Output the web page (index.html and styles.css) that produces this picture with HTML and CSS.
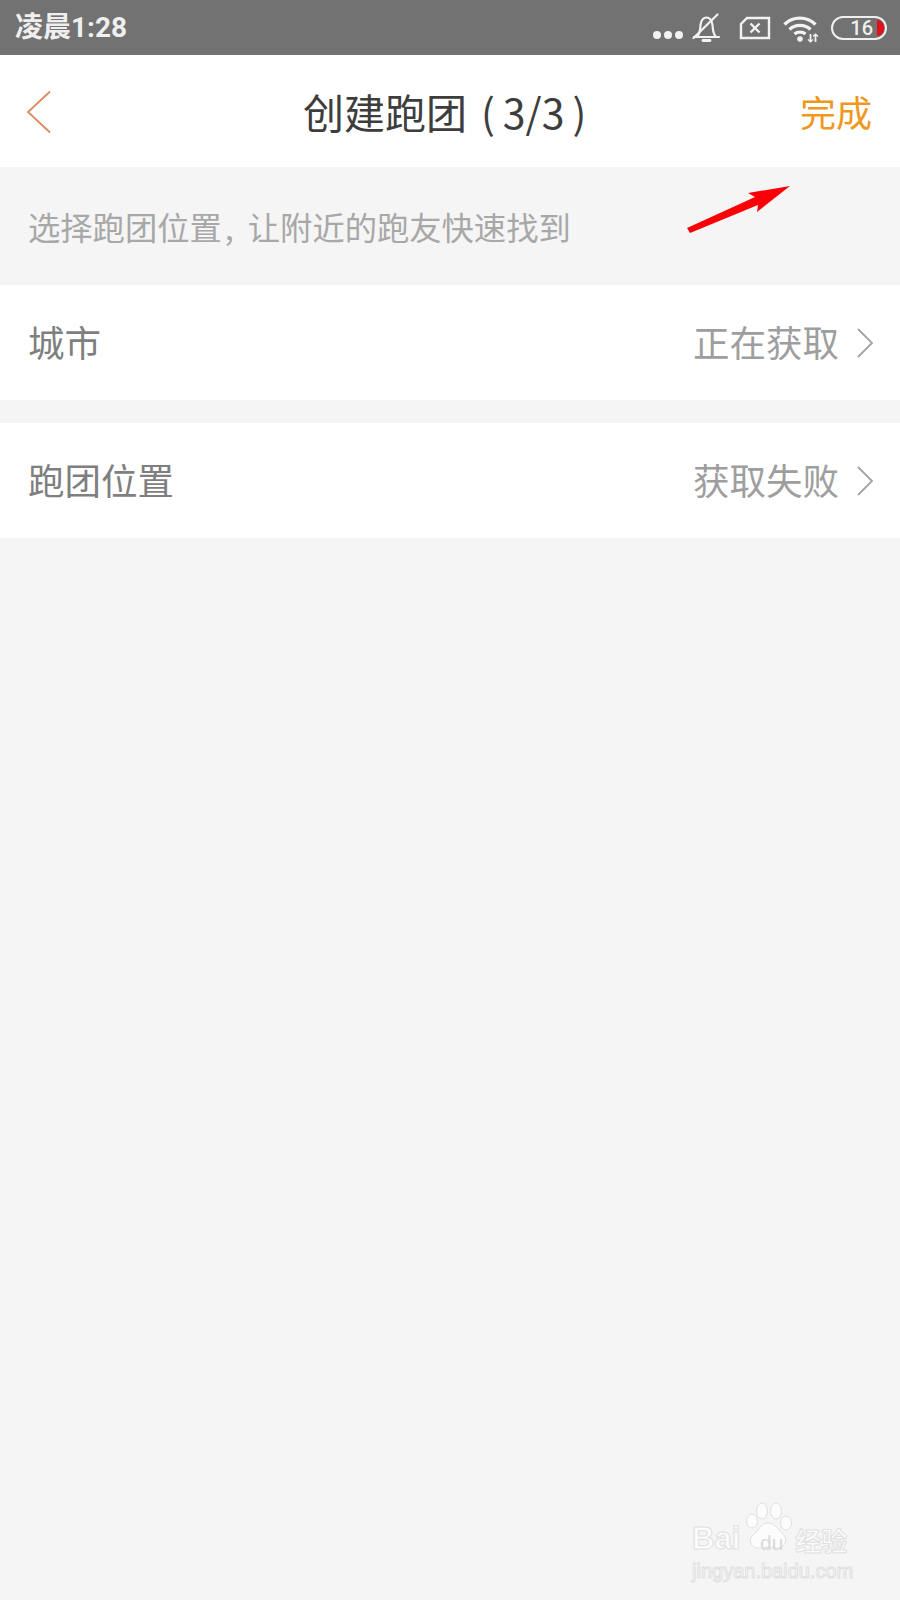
FILE: index.html
```html
<!DOCTYPE html>
<html lang="zh-CN">
<head>
<meta charset="utf-8">
<title>创建跑团</title>
<link rel="stylesheet" href="styles.css">
</head>
<body>
<div class="screen">
  <header class="status">
    <span class="clock">凌晨1:28</span>
    <div class="status-icons">
      <span class="dots"><i></i><i></i><i></i></span>
      <svg class="ic-bell" width="30" height="30" viewBox="0 0 30 30" fill="none" stroke="#f2f2f2" stroke-width="2.200" stroke-linecap="round">
        <path d="M3 24H28M6 24C9.500 20 9 16 9.500 12C10 7.500 12.500 4.500 15.500 4.500C18.500 4.500 21 7.500 21.500 12C22 16 21.500 20 25 24"/>
        <path d="M12 27.500H19" stroke-width="2.800"/>
        <path d="M2.500 25L26.500 1.500"/>
      </svg>
      <svg class="ic-sim" width="32" height="24" viewBox="0 0 32 24" fill="none" stroke="#f2f2f2" stroke-width="2.400">
        <path d="M8 2H30V22H2V8Z"/>
        <path d="M11.500 7.500L20.500 16.500M20.500 7.500L11.500 16.500"/>
      </svg>
      <svg class="ic-wifi" width="36" height="28" viewBox="0 0 36 28" fill="none" stroke="#f2f2f2" stroke-width="3.400">
        <path d="M1.500 9.500C9.500 1 24 1 32.500 9.500M6.500 14.500C12 9 22 9 27.500 14.500M11.500 19C14.500 16.500 19.500 16.500 22.500 19"/>
        <circle cx="17" cy="24" r="2.800" fill="#f2f2f2" stroke="none"/>
        <path d="M27.500 19V27M32.500 19V27" stroke-width="1.800"/>
        <path d="M25 24.500L27.500 27L30 24.500M30 21.500L32.500 19L35 21.500" stroke-width="1.200"/>
      </svg>
      <div class="battery"><span class="batt-num">16</span><span class="batt-low"></span></div>
    </div>
  </header>

  <nav class="nav">
    <svg class="back" width="26" height="46" viewBox="0 0 26 46" fill="none" stroke="#dd8a5c" stroke-width="1.800">
      <path d="M24 2.500L2 23L24 43.500"/>
    </svg>
    <h1 class="title">创建跑团<span class="paren-open">(</span>3/3<span class="paren-close">)</span></h1>
    <span class="done">完成</span>
  </nav>

  <p class="hint">选择跑团位置<span class="hint-comma">,</span>让附近的跑友快速找到</p>

  <section class="row row-first">
    <span class="label">城市</span>
    <span class="value">正在获取</span>
    <svg class="chev" width="18" height="32" viewBox="0 0 18 32" fill="none" stroke="#a3a3a3" stroke-width="1.800"><path d="M2 2L16 16L2 30"/></svg>
  </section>
  <section class="row row-second">
    <span class="label">跑团位置</span>
    <span class="value">获取失败</span>
    <svg class="chev" width="18" height="32" viewBox="0 0 18 32" fill="none" stroke="#a3a3a3" stroke-width="1.800"><path d="M2 2L16 16L2 30"/></svg>
  </section>

  <svg class="arrow" width="106" height="50" viewBox="0 0 106 50">
    <path d="M1 43L69 12L62 8L104 1L71 27L72 20L4 48Z" fill="#fb0007"/>
  </svg>

  <div class="mark">
    <div class="mark-top">
      <span class="mark-bai">Bai</span>
      <svg class="mark-paw" width="48" height="48" viewBox="0 0 48 48" fill="#fcfcfc" stroke="#e0e0e0" stroke-width="1">
        <ellipse cx="7" cy="19" rx="5.500" ry="7"/>
        <ellipse cx="17" cy="9" rx="5.500" ry="8"/>
        <ellipse cx="31" cy="9" rx="5.500" ry="8"/>
        <ellipse cx="41" cy="21" rx="5.500" ry="7"/>
        <path d="M23 21C30 21 32 27 38 32C44 38 39 47 31 46C26 45 20 45 15 46C7 47 2 39 8 33C14 28 16 21 23 21Z"/>
      </svg>
      <span class="mark-du">du</span>
      <span class="mark-cn">经验</span>
    </div>
    <div class="mark-url">jingyan.baidu.com</div>
  </div>
</div>
</body>
</html>
```

FILE: styles.css
```css
* { box-sizing: border-box; }
html, body { margin: 0; padding: 0; }
body { font-family: "Noto Sans CJK SC", "Noto Sans", sans-serif; background: #f5f5f5; }

.screen { position: relative; width: 900px; height: 1600px; background: #f5f5f5; overflow: hidden; }

.status {
  height: 55px;
  background: #727272;
  display: flex;
  align-items: center;
  justify-content: space-between;
  padding: 0 13px 0 15px;
  color: #efefef;
}
.clock { font-family: Roboto, "Noto Sans CJK SC", sans-serif; font-size: 28px; font-weight: 700; line-height: 1; }
.status-icons { display: flex; align-items: center; }
.dots { display: flex; gap: 3px; margin-top: 14px; margin-right: 8px; }
.dots i { display: block; width: 8px; height: 8px; border-radius: 50%; background: #f2f2f2; }
.ic-bell { margin-right: 18px; margin-top: 1px; }
.ic-sim { margin-right: 12px; margin-top: 1px; }
.ic-wifi { margin-right: 12px; margin-top: 3px; }
.battery {
  width: 56px;
  height: 24px;
  border: 2px solid #efefef;
  border-radius: 12px;
  display: flex;
  align-items: center;
  justify-content: flex-end;
  padding-right: 1px;
}
.batt-num { font-family: Roboto, sans-serif; font-size: 20px; font-weight: 500; line-height: 1; margin-right: 4px; }
.batt-low { width: 7px; height: 16px; background: #e0101c; border-radius: 0 8px 8px 0; }

.nav {
  position: relative;
  height: 112px;
  background: #fff;
  display: flex;
  align-items: center;
  justify-content: space-between;
  padding: 0 28px 0 26px;
}
.back { margin-top: 2px; }
.title {
  position: absolute;
  left: 303px;
  top: 0;
  margin: 0;
  font-size: 41px;
  font-weight: 400;
  line-height: 112px;
  color: #3d3d3d;
  white-space: nowrap;
}
.paren-open { margin-left: 14px; margin-right: 8px; }
.paren-close { margin-left: 8px; }
.done { font-size: 36px; line-height: 1; color: #f0971e; }

.hint {
  margin: 0;
  height: 118px;
  padding-left: 28px;
  font-size: 32.300px;
  line-height: 118px;
  color: #a8a8a8;
  white-space: nowrap;
}
.hint-comma { margin-left: 3px; margin-right: 14px; }

.row {
  height: 115px;
  background: #fff;
  display: flex;
  align-items: center;
  padding: 0 26px 0 28px;
}
.row-second { margin-top: 23px; }
.label { font-size: 36.500px; line-height: 1; color: #7f7f7f; flex: 1; }
.value { font-size: 36.500px; line-height: 1; color: #9e9e9e; margin-right: 17px; }

.arrow { position: absolute; left: 686px; top: 185px; }

.mark {
  position: absolute;
  left: 692px;
  top: 1503px;
  width: 170px;
  color: #fcfcfc;
}
.mark-top { display: flex; align-items: flex-end; position: relative; height: 50px; }
.mark-bai {
  font-family: "Liberation Sans", sans-serif;
  font-size: 31px;
  font-weight: 700;
  line-height: 1;
  margin-bottom: -1px;
  -webkit-text-stroke: 1px #e0e0e0;
}
.mark-paw { margin-left: 5px; margin-bottom: 3px; }
.mark-du {
  position: absolute;
  left: 68px;
  top: 29px;
  font-family: "Liberation Sans", sans-serif;
  font-size: 21px;
  line-height: 1;
  color: #dadada;
}
.mark-cn {
  font-size: 26px;
  font-weight: 700;
  line-height: 1;
  margin-left: 2px;
  white-space: nowrap;
  -webkit-text-stroke: 1px #e0e0e0;
}
.mark-url {
  font-family: "Liberation Sans", sans-serif;
  font-size: 20px;
  line-height: 1;
  margin-top: 8px;
  white-space: nowrap;
  -webkit-text-stroke: 1px #e0e0e0;
}
```
